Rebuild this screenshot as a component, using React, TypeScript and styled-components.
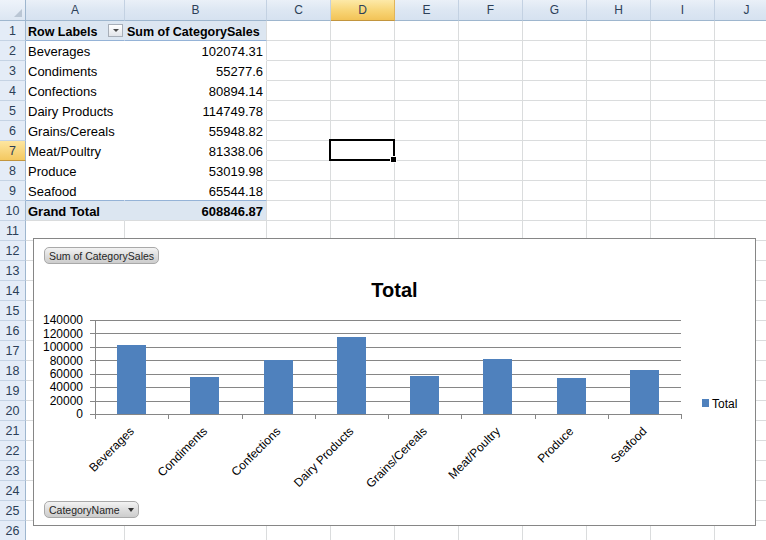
import React from "react";
import styled, { createGlobalStyle, css } from "styled-components";

const GlobalStyle = createGlobalStyle`
  html, body {
    margin: 0;
    padding: 0;
    background: #fff;
  }
  body {
    font-family: "Liberation Sans", Arial, sans-serif;
  }
`;

const COLS = ["A", "B", "C", "D", "E", "F", "G", "H", "I", "J"];
const ACTIVE_COL = 3;
const ACTIVE_ROW = 7;
const ROW_COUNT = 26;

const GRID = "#dadcdd";
const PIVOT_BG = "#dce6f1";
const PIVOT_LINE = "#95b3d7";
const BAR = "#4f81bd";
const AXIS = "#868686";

const sales: [string, number, string][] = [
  ["Beverages", 102074.31, "102074.31"],
  ["Condiments", 55277.6, "55277.6"],
  ["Confections", 80894.14, "80894.14"],
  ["Dairy Products", 114749.78, "114749.78"],
  ["Grains/Cereals", 55948.82, "55948.82"],
  ["Meat/Poultry", 81338.06, "81338.06"],
  ["Produce", 53019.98, "53019.98"],
  ["Seafood", 65544.18, "65544.18"],
];

const Page = styled.div`
  position: relative;
  width: 766px;
  height: 540px;
  overflow: hidden;
  background: #fff;
`;

const Sheet = styled.div`
  display: grid;
  grid-template-columns: 26px 99px 142px repeat(8, 64px);
  grid-template-rows: 21px;
  grid-auto-rows: 20px;
`;

const headFont = css`
  font-family: "Liberation Sans", Arial, sans-serif;
  color: #2c3f58;
  display: flex;
  align-items: center;
  justify-content: center;
  box-sizing: border-box;
`;

const Corner = styled.div`
  position: relative;
  box-sizing: border-box;
  background: linear-gradient(#eef3fa, #dce6f2);
  border-right: 1px solid #9eb6ce;
  border-bottom: 1px solid #9eb6ce;

  &::after {
    content: "";
    position: absolute;
    right: 3px;
    bottom: 3px;
    width: 0;
    height: 0;
    border-left: 8px solid transparent;
    border-bottom: 8px solid #bac6d4;
  }
`;

const ColHead = styled.div<{ $active?: boolean }>`
  ${headFont};
  font-size: 12px;
  border-right: 1px solid ${(p) => (p.$active ? "#e0b45a" : "#c3d1e2")};
  border-bottom: 1px solid ${(p) => (p.$active ? "#c2953e" : "#9eb6ce")};
  background: ${(p) =>
    p.$active
      ? "linear-gradient(#fde9a8, #f8d679 50%, #f2c357)"
      : "linear-gradient(#eaf0f8, #dde7f3 50%, #d6e2f0)"};
`;

const RowHead = styled.div<{ $active?: boolean }>`
  ${headFont};
  font-size: 12.5px;
  border-right: 1px solid #9eb6ce;
  border-bottom: 1px solid ${(p) => (p.$active ? "#c2953e" : "#c5d3e4")};
  background: ${(p) =>
    p.$active ? "linear-gradient(#fde6a0, #f4c860)" : "#e4ecf7"};
`;

type Tone = "plain" | "head" | "body" | "total";

const toneBg = (t: Tone) => (t === "head" || t === "total" ? PIVOT_BG : "#fff");

const Cell = styled.div<{
  $tone: Tone;
  $joinRight?: boolean;
  $bottom?: string;
  $right?: boolean;
  $bold?: boolean;
  $spread?: boolean;
}>`
  position: relative;
  box-sizing: border-box;
  display: flex;
  align-items: center;
  justify-content: ${(p) =>
    p.$spread ? "space-between" : p.$right ? "flex-end" : "flex-start"};
  padding: 2px ${(p) => (p.$spread ? "1px" : "3px")} 0 2px;
  background: ${(p) => toneBg(p.$tone)};
  border-right: 1px solid ${(p) => (p.$joinRight ? toneBg(p.$tone) : GRID)};
  border-bottom: 1px solid ${(p) => p.$bottom ?? GRID};
  font-family: "Liberation Sans", Arial, sans-serif;
  font-size: ${(p) => (p.$tone === "head" ? "12.5px" : "13px")};
  font-weight: ${(p) => (p.$bold ? 700 : 400)};
  color: #000;
  white-space: nowrap;
`;

const FilterButton = styled.span`
  width: 15px;
  height: 13px;
  box-sizing: border-box;
  margin-top: -2px;
  border: 1px solid #a7aeb8;
  background: linear-gradient(#ffffff, #e2e5ea);
  display: flex;
  align-items: center;
  justify-content: center;

  &::after {
    content: "";
    width: 0;
    height: 0;
    border-left: 3px solid transparent;
    border-right: 3px solid transparent;
    border-top: 3px solid #4a4a4a;
  }
`;

const Selection = styled.div`
  position: absolute;
  top: -2px;
  left: -2px;
  right: -1px;
  bottom: -1px;
  border: 2px solid #000;
  z-index: 2;
  pointer-events: none;
`;

const FillHandle = styled.div`
  position: absolute;
  right: -4px;
  bottom: -4px;
  width: 5px;
  height: 5px;
  background: #000;
  border: 1px solid #fff;
`;

const Chart = styled.div`
  position: absolute;
  left: 33px;
  top: 238px;
  width: 723px;
  height: 288px;
  box-sizing: border-box;
  border: 1px solid #868686;
  background: #fff;
  z-index: 3;
  display: flex;
  flex-direction: column;
  padding-top: 8px;
`;

const FieldButton = styled.div<{ $gap?: number }>`
  align-self: flex-start;
  margin-left: 10px;
  height: 17px;
  box-sizing: border-box;
  display: inline-flex;
  align-items: center;
  gap: ${(p) => p.$gap ?? 0}px;
  padding: 0 4px;
  border: 1px solid #a9a9a9;
  border-radius: 5px;
  background: linear-gradient(#f3f3f3, #dcdcdc 55%, #cdcdcd);
  font-family: "Liberation Sans", Arial, sans-serif;
  font-size: 10.5px;
  color: #262626;
  white-space: nowrap;
`;

const Caret = styled.span`
  width: 0;
  height: 0;
  border-left: 3.5px solid transparent;
  border-right: 3.5px solid transparent;
  border-top: 4px solid #333;
`;

const Title = styled.div`
  margin-top: 14px;
  height: 24px;
  line-height: 24px;
  text-align: center;
  font-family: "Liberation Sans", Arial, sans-serif;
  font-size: 20px;
  font-weight: 700;
  color: #000;
`;

const Plot = styled.svg`
  display: block;
  flex: none;
  font-family: "Liberation Sans", Arial, sans-serif;
`;

const BottomRow = styled.div`
  margin-top: 2px;
  display: flex;
`;

const PLOT_W = 721;
const PLOT_H = 197;
const LEFT = 61;
const RIGHT = 647;
const TOP = 18;
const BOTTOM = 112;
const MAX = 140000;
const STEP = (RIGHT - LEFT) / sales.length;
const yFor = (v: number) => BOTTOM - (v / MAX) * (BOTTOM - TOP);

const SalesChart: React.FC = () => {
  const levels = [0, 20000, 40000, 60000, 80000, 100000, 120000, 140000];
  return (
    <Chart>
      <FieldButton>Sum of CategorySales</FieldButton>
      <Title>Total</Title>
      <Plot width={PLOT_W} height={PLOT_H} viewBox={`0 0 ${PLOT_W} ${PLOT_H}`}>
        <g shapeRendering="crispEdges" stroke={AXIS} strokeWidth={1}>
          {levels.map((v) => {
            const y = Math.round(yFor(v)) + 0.5;
            return <line key={v} x1={LEFT - 5} x2={RIGHT} y1={y} y2={y} />;
          })}
          <line x1={LEFT + 0.5} x2={LEFT + 0.5} y1={TOP} y2={BOTTOM + 5} />
          {sales.map((_, i) => {
            const x = Math.round(LEFT + STEP * (i + 1)) + 0.5;
            return <line key={i} x1={x} x2={x} y1={BOTTOM} y2={BOTTOM + 5} />;
          })}
        </g>
        {levels.map((v) => (
          <text key={v} x={49} y={yFor(v) + 4.3} fontSize={12} textAnchor="end" fill="#000">
            {v}
          </text>
        ))}
        {sales.map(([name, value], i) => {
          const cx = LEFT + STEP * (i + 0.5);
          const top = yFor(value);
          return (
            <g key={name}>
              <rect
                x={Math.round(cx - 14.5)}
                y={Math.round(top)}
                width={29}
                height={BOTTOM - Math.round(top)}
                fill={BAR}
                shapeRendering="crispEdges"
              />
              <text
                transform={`translate(${cx + 3} ${BOTTOM + 18}) rotate(-45)`}
                fontSize={12}
                textAnchor="end"
                fill="#000"
              >
                {name}
              </text>
            </g>
          );
        })}
        <rect x={668} y={97} width={7} height={8} fill={BAR} />
        <text x={678} y={105.5} fontSize={12} fill="#000">
          Total
        </text>
      </Plot>
      <BottomRow>
        <FieldButton $gap={8}>
          CategoryName
          <Caret />
        </FieldButton>
      </BottomRow>
    </Chart>
  );
};

const renderCell = (row: number, col: number) => {
  const key = `${row}-${col}`;
  const selected = row === ACTIVE_ROW && col === ACTIVE_COL;

  if (col <= 1 && row <= 10) {
    const isA = col === 0;
    if (row === 1) {
      return isA ? (
        <Cell key={key} $tone="head" $bold $joinRight $spread $bottom={PIVOT_LINE}>
          Row Labels
          <FilterButton />
        </Cell>
      ) : (
        <Cell key={key} $tone="head" $bold $bottom={PIVOT_LINE}>
          Sum of CategorySales
        </Cell>
      );
    }
    if (row === 10) {
      return (
        <Cell key={key} $tone="total" $bold $joinRight={isA} $right={!isA}>
          {isA ? "Grand Total" : "608846.87"}
        </Cell>
      );
    }
    const [name, , shown] = sales[row - 2];
    return (
      <Cell
        key={key}
        $tone="body"
        $joinRight={isA}
        $right={!isA}
        $bottom={row === 9 ? PIVOT_LINE : "#fff"}
      >
        {isA ? name : shown}
      </Cell>
    );
  }

  return (
    <Cell key={key} $tone="plain">
      {selected && (
        <Selection>
          <FillHandle />
        </Selection>
      )}
    </Cell>
  );
};

export default function App() {
  const rows = Array.from({ length: ROW_COUNT }, (_, i) => i + 1);
  return (
    <Page>
      <GlobalStyle />
      <Sheet>
        <Corner />
        {COLS.map((c, i) => (
          <ColHead key={c} $active={i === ACTIVE_COL}>
            {c}
          </ColHead>
        ))}
        {rows.map((r) => (
          <React.Fragment key={r}>
            <RowHead $active={r === ACTIVE_ROW}>{r}</RowHead>
            {COLS.map((_, ci) => renderCell(r, ci))}
          </React.Fragment>
        ))}
      </Sheet>
      <SalesChart />
    </Page>
  );
}
